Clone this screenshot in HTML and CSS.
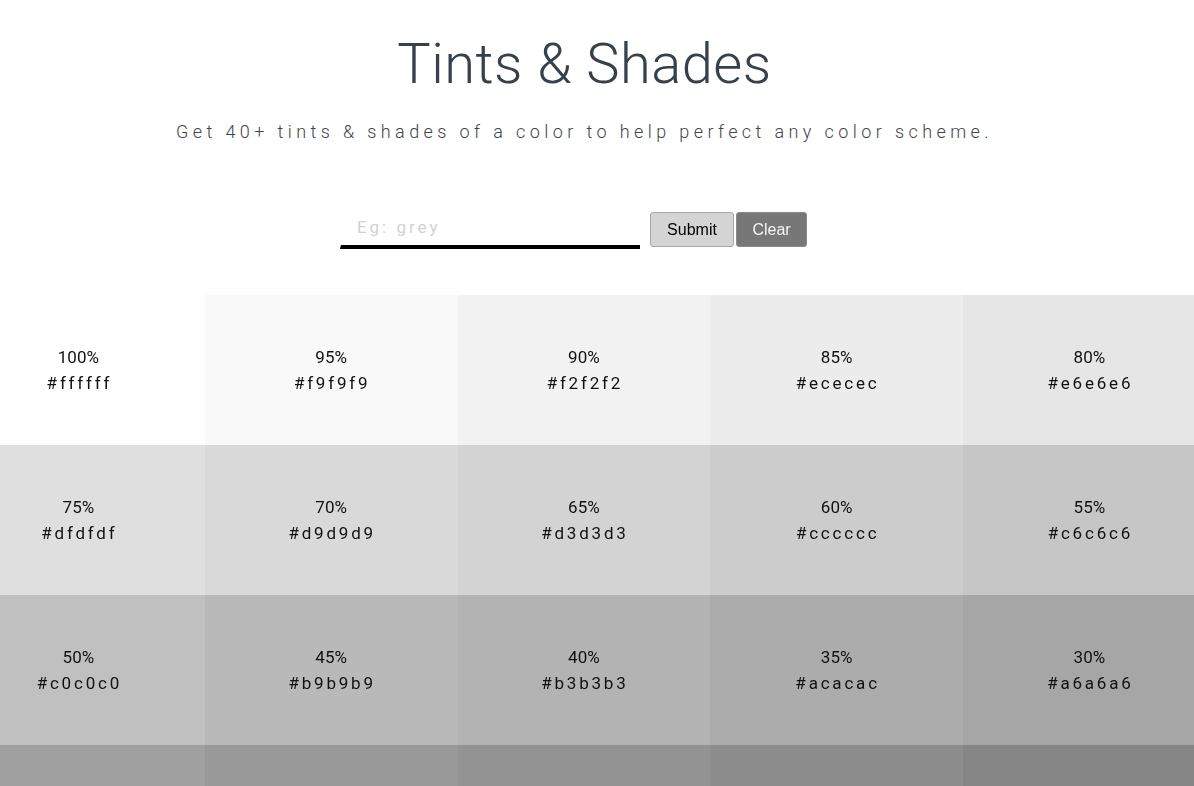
FILE: index.html
```html
<!DOCTYPE html>
<html lang="en">
<head>
<meta charset="utf-8">
<title>Tints &amp; Shades</title>
<link rel="stylesheet" href="styles.css">
</head>
<body>
<header class="header">
  <h1 class="title">Tints &amp; Shades</h1>
  <p class="subtitle">Get 40+ tints &amp; shades of a color to help perfect any color scheme.</p>
</header>
<form class="search" onsubmit="return false">
  <input class="search-input" type="text" placeholder="Eg: grey" autofocus>
  <button class="btn btn-submit" type="submit">Submit</button>
  <button class="btn btn-clear" type="button">Clear</button>
</form>
<main class="swatches">
  <div class="swatch" style="background:#ffffff"><span class="pct">100%</span><span class="hex">#ffffff</span></div>
  <div class="swatch" style="background:#f9f9f9"><span class="pct">95%</span><span class="hex">#f9f9f9</span></div>
  <div class="swatch" style="background:#f2f2f2"><span class="pct">90%</span><span class="hex">#f2f2f2</span></div>
  <div class="swatch" style="background:#ececec"><span class="pct">85%</span><span class="hex">#ececec</span></div>
  <div class="swatch" style="background:#e6e6e6"><span class="pct">80%</span><span class="hex">#e6e6e6</span></div>
  <div class="swatch" style="background:#dfdfdf"><span class="pct">75%</span><span class="hex">#dfdfdf</span></div>
  <div class="swatch" style="background:#d9d9d9"><span class="pct">70%</span><span class="hex">#d9d9d9</span></div>
  <div class="swatch" style="background:#d3d3d3"><span class="pct">65%</span><span class="hex">#d3d3d3</span></div>
  <div class="swatch" style="background:#cccccc"><span class="pct">60%</span><span class="hex">#cccccc</span></div>
  <div class="swatch" style="background:#c6c6c6"><span class="pct">55%</span><span class="hex">#c6c6c6</span></div>
  <div class="swatch" style="background:#c0c0c0"><span class="pct">50%</span><span class="hex">#c0c0c0</span></div>
  <div class="swatch" style="background:#b9b9b9"><span class="pct">45%</span><span class="hex">#b9b9b9</span></div>
  <div class="swatch" style="background:#b3b3b3"><span class="pct">40%</span><span class="hex">#b3b3b3</span></div>
  <div class="swatch" style="background:#acacac"><span class="pct">35%</span><span class="hex">#acacac</span></div>
  <div class="swatch" style="background:#a6a6a6"><span class="pct">30%</span><span class="hex">#a6a6a6</span></div>
  <div class="swatch" style="background:#a0a0a0"><span class="pct">25%</span><span class="hex">#a0a0a0</span></div>
  <div class="swatch" style="background:#999999"><span class="pct">20%</span><span class="hex">#999999</span></div>
  <div class="swatch" style="background:#939393"><span class="pct">15%</span><span class="hex">#939393</span></div>
  <div class="swatch" style="background:#8d8d8d"><span class="pct">10%</span><span class="hex">#8d8d8d</span></div>
  <div class="swatch" style="background:#868686"><span class="pct">5%</span><span class="hex">#868686</span></div>
  <div class="swatch" style="background:#808080"><span class="pct">0%</span><span class="hex">#808080</span></div>
  <div class="swatch dark" style="background:#7a7a7a"><span class="pct">5%</span><span class="hex">#7a7a7a</span></div>
  <div class="swatch dark" style="background:#737373"><span class="pct">10%</span><span class="hex">#737373</span></div>
  <div class="swatch dark" style="background:#6d6d6d"><span class="pct">15%</span><span class="hex">#6d6d6d</span></div>
  <div class="swatch dark" style="background:#666666"><span class="pct">20%</span><span class="hex">#666666</span></div>
  <div class="swatch dark" style="background:#606060"><span class="pct">25%</span><span class="hex">#606060</span></div>
  <div class="swatch dark" style="background:#5a5a5a"><span class="pct">30%</span><span class="hex">#5a5a5a</span></div>
  <div class="swatch dark" style="background:#535353"><span class="pct">35%</span><span class="hex">#535353</span></div>
  <div class="swatch dark" style="background:#4d4d4d"><span class="pct">40%</span><span class="hex">#4d4d4d</span></div>
  <div class="swatch dark" style="background:#464646"><span class="pct">45%</span><span class="hex">#464646</span></div>
  <div class="swatch dark" style="background:#404040"><span class="pct">50%</span><span class="hex">#404040</span></div>
  <div class="swatch dark" style="background:#3a3a3a"><span class="pct">55%</span><span class="hex">#3a3a3a</span></div>
  <div class="swatch dark" style="background:#333333"><span class="pct">60%</span><span class="hex">#333333</span></div>
  <div class="swatch dark" style="background:#2d2d2d"><span class="pct">65%</span><span class="hex">#2d2d2d</span></div>
  <div class="swatch dark" style="background:#262626"><span class="pct">70%</span><span class="hex">#262626</span></div>
  <div class="swatch dark" style="background:#202020"><span class="pct">75%</span><span class="hex">#202020</span></div>
  <div class="swatch dark" style="background:#1a1a1a"><span class="pct">80%</span><span class="hex">#1a1a1a</span></div>
  <div class="swatch dark" style="background:#131313"><span class="pct">85%</span><span class="hex">#131313</span></div>
  <div class="swatch dark" style="background:#0d0d0d"><span class="pct">90%</span><span class="hex">#0d0d0d</span></div>
  <div class="swatch dark" style="background:#060606"><span class="pct">95%</span><span class="hex">#060606</span></div>
  <div class="swatch dark" style="background:#000000"><span class="pct">100%</span><span class="hex">#000000</span></div>
</main>
</body>
</html>
```

FILE: styles.css
```css
html, body {
  margin: 0;
  padding: 0;
  background: #ffffff;
  overflow-x: hidden;
}

body {
  font-family: Roboto, "Liberation Sans", sans-serif;
  color: #111;
}

.header {
  padding: 32px 25px 0 0;
  text-align: center;
}

.title {
  margin: 0;
  font-size: 56px;
  line-height: 64px;
  font-weight: 300;
  color: #36424b;
  letter-spacing: 0.5px;
}

.subtitle {
  margin: 24px 0 0;
  font-size: 18px;
  line-height: 24px;
  font-weight: 300;
  color: #3e454b;
  letter-spacing: 4.4px;
}

.search {
  display: flex;
  justify-content: center;
  align-items: flex-start;
  margin-top: 68px;
  padding-right: 47px;
}

.search-input {
  box-sizing: border-box;
  width: 300px;
  height: 37px;
  margin: 0 10px 0 0;
  padding: 0 15px 3px 16px;
  border: none;
  border-left: 1px solid transparent;
  border-bottom: 4px solid #000;
  outline: none;
  background: transparent;
  font-family: Roboto, "Liberation Sans", sans-serif;
  font-size: 17px;
  letter-spacing: 3px;
  color: #222;
  caret-color: #000;
}

.search-input::placeholder {
  color: #d2d2d2;
}

.btn {
  box-sizing: border-box;
  height: 35px;
  padding: 0 15px;
  border-radius: 3px;
  font-family: "Liberation Sans", Arial, sans-serif;
  font-size: 16px;
  cursor: pointer;
}

.btn-submit {
  width: 84px;
  background: #d4d4d4;
  border: 1px solid #a9a9a9;
  color: #000;
}

.btn-clear {
  width: 71px;
  margin-left: 2px;
  background: #777777;
  border: 1px solid #8a8a8a;
  color: #f4f4f4;
}

.swatches {
  display: grid;
  grid-template-columns: repeat(5, 252.75px);
  margin: 46px 0 0 -48px;
}

.swatch {
  height: 150px;
  display: flex;
  flex-direction: column;
  align-items: center;
  justify-content: center;
  font-size: 17px;
  line-height: 26px;
  color: #111;
}

.swatch.dark {
  color: #fff;
}

.pct {
  letter-spacing: 0;
}

.hex {
  letter-spacing: 2.8px;
  padding-left: 2px;
}
```
